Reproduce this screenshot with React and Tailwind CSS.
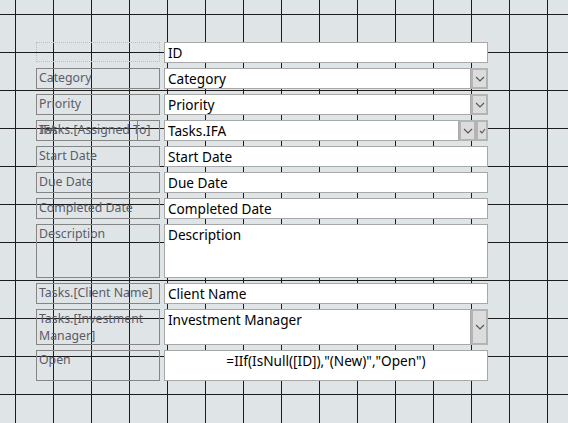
import React from "react";

const font = { fontFamily: '"Noto Sans", "Open Sans", sans-serif' };

function Chevron() {
  return (
    <svg width="10" height="6" viewBox="0 0 10 6" className="block">
      <polyline points="1,1 5,5 9,1" fill="none" stroke="#555" strokeWidth="1.1" />
    </svg>
  );
}

function ComboButton() {
  return (
    <div className="w-[17px] h-full bg-[#dcdcdc] border-2 border-[#b4b4b4] flex items-center justify-center shrink-0">
      <Chevron />
    </div>
  );
}

function Label({ children, className = "" }) {
  return (
    <div
      className={
        "w-[124px] h-full border border-[#858585] px-[2px] text-[12.3px] leading-[17px] text-[#5b5b66] shrink-0 " +
        className
      }
    >
      {children}
    </div>
  );
}

function TextBox({ children, combo, className = "" }) {
  return (
    <div className="w-[324px] h-full flex shrink-0">
      <div
        className={
          "flex-1 h-full bg-white border border-[#a8a8a8] px-[3px] pt-[1px] text-[13.6px] leading-[17px] text-black " +
          className
        }
      >
        {children}
      </div>
      {combo}
    </div>
  );
}

function Row({ h, label, children }) {
  return (
    <div className={"flex gap-[4px] " + h}>
      {label}
      {children}
    </div>
  );
}

export default function App() {
  return (
    <div
      style={font}
      className="w-[568px] h-[423px] overflow-hidden bg-[#dfe4e7] bg-[linear-gradient(to_right,#1c1c1c_0_1.5px,transparent_1.5px),linear-gradient(to_bottom,#1c1c1c_0_1.5px,transparent_1.5px)] bg-size-[38px_38px] bg-position-[15px_14px]"
    >
      <div className="pt-[42px] pl-[36px] flex flex-col gap-[5px]">
        <Row h="h-[21px]" label={<div className="w-[124px] h-[20px] border border-dotted border-[#b8bec2] shrink-0" />}>
          <TextBox>ID</TextBox>
        </Row>
        <Row h="h-[21px]" label={<Label>Category</Label>}>
          <TextBox combo={<ComboButton />}>Category</TextBox>
        </Row>
        <Row h="h-[21px]" label={<Label>Priority</Label>}>
          <TextBox combo={<ComboButton />}>Priority</TextBox>
        </Row>
        <Row
          h="h-[21px]"
          label={
            <div className="relative w-[124px] h-full shrink-0">
              <Label className="w-[124px]">Tasks.[Assigned To]</Label>
              <div className="absolute left-0 top-0 w-[102px] h-[21px] border border-[#858585] px-[2px] text-[12.3px] leading-[17px] text-[#5b5b66]">
                IFA
              </div>
            </div>
          }
        >
          <TextBox
            combo={
              <>
                <ComboButton />
                <div className="w-[12px] h-full bg-[#dcdcdc] border-2 border-[#b4b4b4] flex items-center justify-center shrink-0">
                  <svg width="7" height="6" viewBox="0 0 7 6" className="block">
                    <polyline points="1,3 3,5 6,1" fill="none" stroke="#555" strokeWidth="1.1" />
                  </svg>
                </div>
              </>
            }
          >
            Tasks.IFA
          </TextBox>
        </Row>
        <Row h="h-[21px]" label={<Label>Start Date</Label>}>
          <TextBox>Start Date</TextBox>
        </Row>
        <Row h="h-[21px]" label={<Label>Due Date</Label>}>
          <TextBox>Due Date</TextBox>
        </Row>
        <Row h="h-[21px]" label={<Label>Completed Date</Label>}>
          <TextBox>Completed Date</TextBox>
        </Row>
        <Row h="h-[54px]" label={<Label>Description</Label>}>
          <TextBox>Description</TextBox>
        </Row>
        <Row h="h-[21px]" label={<Label>Tasks.[Client Name]</Label>}>
          <TextBox>Client Name</TextBox>
        </Row>
        <Row h="h-[36px]" label={<Label>Tasks.[Investment Manager]</Label>}>
          <TextBox combo={<ComboButton />}>Investment Manager</TextBox>
        </Row>
        <Row h="h-[31px]" label={<Label>Open</Label>}>
          <TextBox className="text-center">=IIf(IsNull([ID]),"(New)","Open")</TextBox>
        </Row>
      </div>
    </div>
  );
}
